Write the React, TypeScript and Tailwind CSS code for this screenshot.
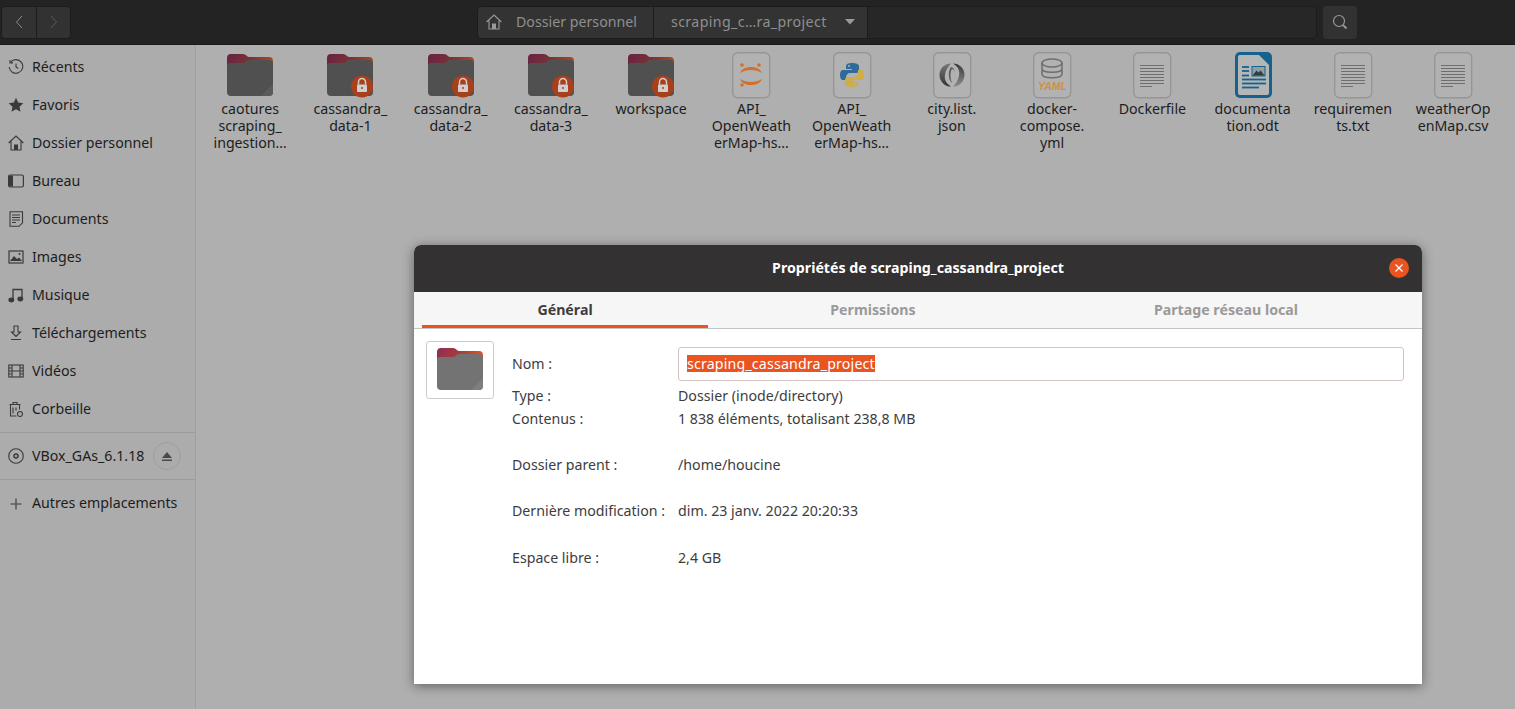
import React from "react";

const Folder = ({ lock, id, dim = true }: { lock?: boolean; id: string; dim?: boolean }) => (
  <svg width="48" height="44" viewBox="0 2 48 44" className="shrink-0">
    <defs>
      <linearGradient id={id} x1="0" x2="1" y1="0" y2="0.3">
        <stop offset="0" stopColor={dim ? "#662244" : "#8e2c55"} />
        <stop offset="0.55" stopColor={dim ? "#7a3336" : "#a83d3a"} />
        <stop offset="1" stopColor={dim ? "#a84a24" : "#e95420"} />
      </linearGradient>
    </defs>
    <path d="M1 6a4 4 0 0 1 4-4h12c3 0 4 3 6 3h20a4 4 0 0 1 4 4v12H1z" fill={`url(#${id})`} />
    <path d="M1 14a3 3 0 0 1 3-3h13c3 0 3-3 6-3h20a4 4 0 0 1 4 4v28a4 4 0 0 1-4 4H5a4 4 0 0 1-4-4z" fill={dim ? "#505050" : "#737373"} />
    {!lock && <path d="M47 32v8a4 4 0 0 1-4 4h-8z" fill={dim ? "#5a5a5a" : "#7e7e7e"} />}
    {lock && (
      <g>
        <circle cx="36" cy="34.500" r="11" fill="#a8401c" />
        <path d="M32.500 32.500v-2.500a3.500 3.500 0 0 1 7 0v2.500" fill="none" stroke="#cfcfcf" strokeWidth="1.500" />
        <rect x="31" y="32.500" width="10" height="7.500" rx="0.800" fill="#cfcfcf" />
        <circle cx="36" cy="36" r="1" fill="#a8401c" />
      </g>
    )}
  </svg>
);

const Sheet = ({ children, stroke = "#969696", fill = "#b2b2b2" }: { children?: React.ReactNode; stroke?: string; fill?: string }) => (
  <svg width="40" height="48" viewBox="0 0 40 48" className="shrink-0">
    <rect x="1.700" y="0.700" width="37" height="45" rx="5" fill={fill} stroke={stroke} strokeWidth="1.400" />
    {children}
  </svg>
);

const TextLines = () => (
  <g stroke="#6e6e6e" strokeWidth="1">
    {[13, 16, 19, 22, 25, 28, 31].map((y) => (
      <line key={y} x1="8" x2="32" y1={y + 0.5} y2={y + 0.5} />
    ))}
    <line x1="8" x2="20" y1="34.500" y2="34.500" />
  </g>
);

const items: { lines: string[]; icon: React.ReactNode }[] = [
  { lines: ["caotures", "scraping_", "ingestion…"], icon: <Folder id="f0" /> },
  { lines: ["cassandra_", "data-1"], icon: <Folder id="f1" lock /> },
  { lines: ["cassandra_", "data-2"], icon: <Folder id="f2" lock /> },
  { lines: ["cassandra_", "data-3"], icon: <Folder id="f3" lock /> },
  { lines: ["workspace"], icon: <Folder id="f4" lock /> },
  {
    lines: ["API_", "OpenWeath", "erMap-hs…"],
    icon: (
      <Sheet>
        <path d="M9 21c3-8 19-8 22 0c-6-4-16-4-22 0z" fill="#d0702c" />
        <path d="M9 27c6 4 16 4 22 0c-3 8-19 8-22 0z" fill="#d0702c" />
        <circle cx="11" cy="13" r="1.800" fill="#d0702c" />
        <circle cx="28" cy="13" r="1.800" fill="#d0702c" />
        <circle cx="11" cy="33" r="1.800" fill="#d0702c" />
      </Sheet>
    ),
  },
  {
    lines: ["API_", "OpenWeath", "erMap-hs…"],
    icon: (
      <Sheet>
        <path d="M20 11c-4 0-6 1-6 3v3h6v1h-9c-2 0-3 2-3 5s1 5 3 5h3v-3c0-2 2-4 4-4h6c2 0 3-1 3-3v-4c0-2-3-3-7-3z" fill="#2f6a98" />
        <path d="M20 35c4 0 6-1 6-3v-3h-6v-1h9c2 0 3-2 3-5s-1-5-3-5h-3v3c0 2-2 4-4 4h-6c-2 0-3 1-3 3v4c0 2 3 3 7 3z" fill="#cfae45" />
        <circle cx="17" cy="14" r="1" fill="#b2b2b2" />
        <circle cx="23" cy="32" r="1" fill="#b2b2b2" />
      </Sheet>
    ),
  },
  {
    lines: ["city.list.", "json"],
    icon: (
      <Sheet>
        <defs>
          <linearGradient id="jsl" x1="0" x2="0" y1="0" y2="1">
            <stop offset="0" stopColor="#777777" />
            <stop offset="1" stopColor="#333333" />
          </linearGradient>
          <linearGradient id="jsr" x1="0" x2="0" y1="0" y2="1">
            <stop offset="0" stopColor="#383838" />
            <stop offset="1" stopColor="#8c8c8c" />
          </linearGradient>
        </defs>
        <path d="M19 11.500a11.500 11.500 0 0 0 0 23c-5-3-7-7-6-12c.5-4 3-8 6-11z" fill="url(#jsl)" />
        <path d="M21 34.500a11.500 11.500 0 0 0 0-23c5 3 7 7 6 12c-.5 4-3 8-6 11z" fill="url(#jsr)" />
        <path d="M19 15c-3 3-3 13 1 16c-2-5-2-11 0-14c2 0 3 3 2 5c1-2 1-6-3-7z" fill="#5e5e5e" />
      </Sheet>
    ),
  },
  {
    lines: ["docker-", "compose.", "yml"],
    icon: (
      <Sheet>
        <ellipse cx="20" cy="11" rx="10" ry="4" fill="none" stroke="#6e6e6e" strokeWidth="1.500" />
        <path d="M10 11v11c0 5 20 5 20 0V11M10 16.500c0 5 20 5 20 0" fill="none" stroke="#6e6e6e" strokeWidth="1.500" />
        <rect x="3" y="29" width="35" height="10" fill="#b2b2b2" />
        <text x="20.500" y="38" textAnchor="middle" fontFamily="'Liberation Sans',sans-serif" fontSize="10.500" fontWeight="700" fontStyle="italic" fill="#cf9044">YAML</text>
      </Sheet>
    ),
  },
  { lines: ["Dockerfile"], icon: <Sheet><TextLines /></Sheet> },
  {
    lines: ["documenta", "tion.odt"],
    icon: (
      <svg width="40" height="48" viewBox="0 0 40 48" className="shrink-0">
        <path d="M7 0h27a5 5 0 0 1 5 5v36a5 5 0 0 1-5 5H7a5 5 0 0 1-5-5V5a5 5 0 0 1 5-5z" fill="#15618f" />
        <path d="M7 3h19l10 10v28a2 2 0 0 1-2 2H7a2 2 0 0 1-2-2V5a2 2 0 0 1 2-2z" fill="#b6b6b6" />
        <g stroke="#15618f" strokeWidth="1.800">
          <line x1="9" x2="16" y1="15" y2="15" />
          <line x1="9" x2="16" y1="19" y2="19" />
          <line x1="9" x2="16" y1="23.500" y2="23.500" />
          <line x1="9" x2="33" y1="27.500" y2="27.500" />
          <line x1="9" x2="33" y1="31.500" y2="31.500" />
          <line x1="9" x2="26" y1="35.500" y2="35.500" />
        </g>
        <rect x="19" y="14.500" width="13" height="9.500" fill="#8aa0ac" stroke="#15618f" />
        <path d="M19.500 23.500l4-5l2 2l2-2l4 5z" fill="#3a3a3a" />
        <circle cx="30" cy="16.500" r="1" fill="#c9a93a" />
      </svg>
    ),
  },
  { lines: ["requiremen", "ts.txt"], icon: <Sheet><TextLines /></Sheet> },
  { lines: ["weatherOp", "enMap.csv"], icon: <Sheet><TextLines /></Sheet> },
];

const g = "#3a3a3a";
const side: { label: string; icon: React.ReactNode }[] = [
  { label: "Récents", icon: <svg viewBox="0 0 16 16" className="h-4 w-4" fill="none" stroke={g} strokeWidth="1.100"><path d="M2.600 3.300A6.800 6.800 0 1 1 1.200 8" /><path d="M2 .9v3h3" /><path d="M8 4.500V8l2.300 1.500" /></svg> },
  { label: "Favoris", icon: <svg viewBox="0 0 16 16" className="h-4 w-4" fill={g}><path d="M8 .8l2.200 4.800 5.100.6-3.800 3.500 1 5.100L8 12.300l-4.500 2.500 1-5.100L.7 6.200l5.100-.6z" /></svg> },
  { label: "Dossier personnel", icon: <svg viewBox="0 0 16 16" className="h-4 w-4" fill="none" stroke={g} strokeWidth="1.100"><path d="M.6 8L8 1l7.400 7M3 6.500V15h10V6.500" /><rect x="6" y="9.500" width="4" height="5.500" fill={g} stroke="none" /></svg> },
  { label: "Bureau", icon: <svg viewBox="0 0 16 16" className="h-4 w-4" fill="none"><rect x=".6" y="2" width="14.800" height="12" rx="1.500" stroke={g} strokeWidth="1.200" /><path d="M1 2.500h4v11H1z" fill={g} /></svg> },
  { label: "Documents", icon: <svg viewBox="0 0 16 16" className="h-4 w-4" fill="none" stroke={g} strokeWidth="1.100"><path d="M2 .8h12.500v11l-3.500 3.500H2z" /><path d="M4 4h8M4 6.500h8M4 9h8M4 11.500h4" /></svg> },
  { label: "Images", icon: <svg viewBox="0 0 16 16" className="h-4 w-4"><rect x="1" y="2" width="14" height="12" fill="none" stroke={g} strokeWidth="1.200" /><path d="M2 12l4-5 3 3 2-1.500 3 3.500z" fill={g} /><circle cx="11.500" cy="5" r="1" fill={g} /></svg> },
  { label: "Musique", icon: <svg viewBox="0 0 16 16" className="h-4 w-4" fill="none" stroke={g} strokeWidth="1.300"><path d="M5 13V2.500h9V12" /><ellipse cx="3.300" cy="13" rx="2.300" ry="1.800" fill={g} /><ellipse cx="12.300" cy="12" rx="2.300" ry="1.800" fill={g} /></svg> },
  { label: "Téléchargements", icon: <svg viewBox="0 0 16 16" className="h-4 w-4" fill="none" stroke={g} strokeWidth="1.100"><path d="M6 1h4v6h2.500L8 11.500 3.500 7H6zM3 14.500h10" /></svg> },
  { label: "Vidéos", icon: <svg viewBox="0 0 16 16" className="h-4 w-4" fill="none" stroke={g} strokeWidth="1.100"><rect x=".8" y="2" width="14.400" height="12" /><path d="M4 2v12M12 2v12M.8 8h14.400M.8 5h3M.8 11h3M12 5h3M12 11h3" /></svg> },
  { label: "Corbeille", icon: <svg viewBox="0 0 16 16" className="h-4 w-4" fill="none" stroke={g} strokeWidth="1.100"><path d="M1.500 3.500h11M5 3.500V1.500h4v2M2.500 3.500v11.500h6M11.500 3.500v5M5 6.500v6M8 6.500v3" /><circle cx="12" cy="13" r="2.500" /></svg> },
];

const font = "font-['Noto_Sans','Open_Sans',sans-serif]";

const Info = ({ label, value, className }: { label: string; value: string; className: string }) => (
  <div className={`flex h-[20px] items-center pb-px ${className}`}>
    <span className="w-[166px] shrink-0">{label}</span>
    <span>{value}</span>
  </div>
);

export default function App() {
  return (
    <div className={`relative flex h-[709px] w-[1515px] flex-col overflow-hidden bg-[#afafaf] text-[14.200px] text-[#1d1d1d] ${font}`}>
      <header className="flex h-[45px] shrink-0 items-center border-b border-[#1a1a1a] bg-[#232323] pl-px pr-[4px]">
        <div className="flex h-[33px] w-[70px] rounded-[4px] border border-[#1d1d1d] bg-[#323232]">
          <div className="flex w-[35px] items-center justify-center border-r border-[#1d1d1d]">
            <svg width="8" height="14" viewBox="0 0 8 14" fill="none" stroke="#8b8b8b" strokeWidth="1"><path d="M7 1L1.500 7L7 13" /></svg>
          </div>
          <div className="flex flex-1 items-center justify-center">
            <svg width="8" height="14" viewBox="0 0 8 14" fill="none" stroke="#5c5c5c" strokeWidth="1"><path d="M1 1l5.500 6L1 13" /></svg>
          </div>
        </div>
        <div className="ml-[406px] flex h-[33px] w-[840px] rounded-[4px] border border-[#1c1c1c] bg-[#272727] text-[#8f8f8f]">
          <div className="flex w-[176px] items-center rounded-l-[4px] border-r border-[#1c1c1c] bg-[#333333] pl-[8px]">
            <svg viewBox="0 0 16 16" className="mr-[14px] h-4 w-4" fill="none" stroke="#9a9a9a" strokeWidth="1.100"><path d="M.6 8L8 1l7.400 7M3 6.500V15h10V6.500" /><rect x="6" y="9.500" width="4" height="5.500" fill="#9a9a9a" stroke="none" /></svg>
            <span className="whitespace-nowrap">Dossier personnel</span>
          </div>
          <div className="flex w-[214px] items-center border-r border-[#1c1c1c] bg-[#333333] pl-[17px]">
            <span className="whitespace-nowrap tracking-[0.38px]">scraping_c…ra_project</span>
            <svg width="10" height="6" viewBox="0 0 10 6" className="ml-[18px]"><path d="M0 0h10L5 5.500z" fill="#9a9a9a" /></svg>
          </div>
        </div>
        <div className="ml-[6px] flex h-[33px] w-[34px] items-center justify-center rounded-[4px] bg-[#323232]">
          <svg width="16" height="16" viewBox="0 0 16 16" fill="none" stroke="#9a9a9a" strokeWidth="1.200"><circle cx="7" cy="7" r="5.500" /><path d="M11 11l3.500 3.500" strokeWidth="1.800" /></svg>
        </div>
      </header>

      <div className="flex min-h-0 flex-1">
        <aside className="flex w-[196px] shrink-0 flex-col border-r border-[#a0a0a0] bg-[#acacac] pt-[3px]">
          {side.map((s) => (
            <div key={s.label} className="flex h-[38px] items-center pl-[8px]">
              {s.icon}
              <span className="ml-[8px] whitespace-nowrap pb-px">{s.label}</span>
            </div>
          ))}
          <div className="mt-[4px] border-t border-[#9c9c9c]" />
          <div className="flex h-[46px] items-center pl-[8px]">
            <svg viewBox="0 0 16 16" className="h-4 w-4" fill="none" stroke={g} strokeWidth="1.100"><circle cx="8" cy="8" r="7.300" /><circle cx="8" cy="8" r="2" strokeWidth="1.500" /></svg>
            <span className="ml-[8px] whitespace-nowrap pb-px">VBox_GAs_6.1.18</span>
            <div className="ml-[9px] flex h-[28px] w-[28px] items-center justify-center rounded-full border border-[#9f9f9f]">
              <svg width="10" height="9" viewBox="0 0 10 9" fill="#4a4a4a"><path d="M5 0l5 6H0zM0 7.500h10V9H0z" /></svg>
            </div>
          </div>
          <div className="border-t border-[#9c9c9c]" />
          <div className="flex h-[47px] items-center pl-[8px]">
            <svg viewBox="0 0 16 16" className="h-4 w-4" fill="none" stroke={g} strokeWidth="1.100"><path d="M8 2.500v11M2.500 8h11" /></svg>
            <span className="ml-[8px] whitespace-nowrap pb-px">Autres emplacements</span>
          </div>
        </aside>

        <main className="flex items-start pl-[4px] pt-[7px]">
          {items.map((it, i) => (
            <div key={i} className="flex w-[100.25px] shrink-0 flex-col items-center">
              <div className="flex h-[48px] items-center justify-center">{it.icon}</div>
              <div className="text-center leading-[17px]">
                {it.lines.map((l) => (
                  <div key={l} className="whitespace-nowrap">{l}</div>
                ))}
              </div>
            </div>
          ))}
        </main>
      </div>

      <div className="absolute left-[414px] top-[245px] flex h-[439px] w-[1008px] flex-col overflow-hidden rounded-t-[7px] bg-white text-[#3d3d3d] shadow-[0_2px_12px_rgba(0,0,0,0.45)]">
        <div className="relative flex h-[47px] shrink-0 items-center justify-center bg-[#333131] font-bold text-white">
          <span className="pb-[2px]">Propriétés de scraping_cassandra_project</span>
          <div className="absolute right-[13px] top-[13px] flex h-5 w-5 items-center justify-center rounded-full bg-[#e95420]">
            <svg width="8" height="8" viewBox="0 0 8 8" stroke="#fff" strokeWidth="1.300"><path d="M.5.500l7 7M7.500.500l-7 7" /></svg>
          </div>
        </div>
        <div className="flex h-[37px] shrink-0 border-b border-[#c4c4c4] bg-[#f6f6f6] px-[8px] font-bold text-[#9a9a9a]">
          <div className="flex w-[286px] items-center justify-center border-b-[3px] border-[#e95420] pt-[2px] text-[#3d3d3d]">Général</div>
          <div className="flex w-[330px] items-center justify-center">Permissions</div>
          <div className="flex flex-1 items-center justify-center">Partage réseau local</div>
        </div>
        <div className="flex flex-1 pl-[12px] pt-[12px]">
          <div className="flex h-[58px] w-[68px] shrink-0 items-center justify-center rounded-[3px] border border-[#cdcdcd]">
            <Folder id="f9" dim={false} />
          </div>
          <div className="ml-[18px] flex flex-1 flex-col pr-[18px]">
            <div className="mt-[6px] flex h-[34px] items-center">
              <span className="w-[166px] shrink-0 pb-px">Nom :</span>
              <div className="flex h-[34px] flex-1 items-center rounded-[3px] border border-[#d3c3c0] pb-[2px] pl-[8px]">
                <span className="bg-[#e95420] leading-[17px] tracking-[0.17px] text-white">scraping_cassandra_project</span>
              </div>
            </div>
            <Info className="mt-[5px]" label="Type :" value="Dossier (inode/directory)" />
            <Info className="mt-[3px]" label="Contenus :" value="1 838 éléments, totalisant 238,8 MB" />
            <Info className="mt-[26px]" label="Dossier parent :" value="/home/houcine" />
            <Info className="mt-[26px]" label="Dernière modification :" value="dim. 23 janv. 2022 20:20:33" />
            <Info className="mt-[27px]" label="Espace libre :" value="2,4 GB" />
          </div>
        </div>
      </div>
    </div>
  );
}
